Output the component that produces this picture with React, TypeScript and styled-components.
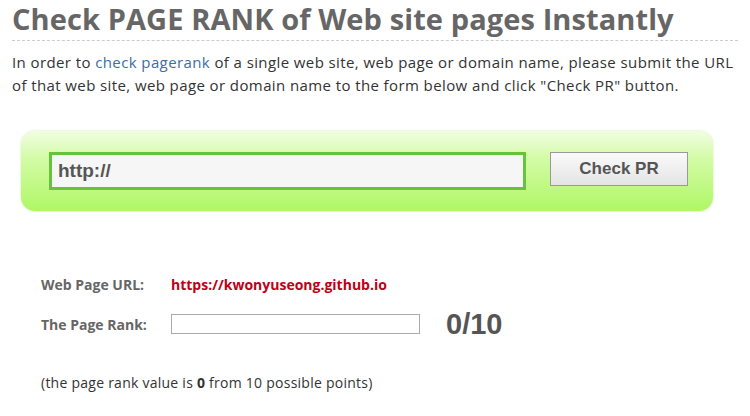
import React from "react";
import styled, { createGlobalStyle } from "styled-components";

const GlobalStyle = createGlobalStyle`
  html, body {
    margin: 0;
    padding: 0;
    background: #fff;
  }
  body {
    font-family: "Open Sans", "DejaVu Sans", sans-serif;
  }
`;

const Page = styled.main`
  width: 750px;
  padding: 0 12px 0 12px;
  box-sizing: border-box;
`;

const Title = styled.h1`
  margin: 0;
  padding: 2px 0 4px;
  font-size: 29px;
  line-height: 34px;
  font-weight: 700;
  color: #666;
  border-bottom: 1px dashed #ccc;
  letter-spacing: 0.1px;
`;

const Intro = styled.p`
  margin: 10px 0 0;
  font-size: 15px;
  line-height: 23px;
  color: #333;
  letter-spacing: 0.4px;

  a {
    color: #3a6ea5;
    text-decoration: none;
  }
`;

const FormPanel = styled.form`
  margin: 34px 0 0 9px;
  width: 692px;
  height: 80px;
  box-sizing: border-box;
  border-radius: 14px;
  background: linear-gradient(to bottom, #f1fde2 0%, #d3fba6 35%, #aef765 100%);
  box-shadow: 0 0 2px rgba(140, 220, 80, 0.6);
  display: flex;
  align-items: flex-start;
  padding: 21px 0 0 28px;
  gap: 24px;
`;

const UrlInput = styled.input`
  width: 477px;
  height: 38px;
  box-sizing: border-box;
  border: 3px solid #66c33b;
  background: #f6f6f6;
  padding: 0 6px;
  font-family: "Liberation Sans", Arial, sans-serif;
  font-size: 19px;
  font-weight: 700;
  color: #555;
  outline: none;
`;

const CheckButton = styled.button`
  width: 138px;
  height: 34px;
  box-sizing: border-box;
  border: 1px solid #999;
  background: linear-gradient(to bottom, #fafafa 0%, #e4e4e4 100%);
  font-family: "Liberation Sans", Arial, sans-serif;
  font-size: 17px;
  font-weight: 700;
  color: #555;
  cursor: pointer;
`;

const Results = styled.section`
  margin: 58px 0 0 29px;
  display: flex;
  flex-direction: column;
`;

const Row = styled.div<{ $h: number }>`
  display: flex;
  align-items: center;
  height: ${(p) => p.$h}px;
`;

const Label = styled.span`
  width: 130px;
  font-size: 14px;
  font-weight: 700;
  color: #666;
`;

const UrlValue = styled.span`
  font-size: 14px;
  font-weight: 700;
  color: #c00018;
`;

const RankBar = styled.div`
  width: 249px;
  height: 20px;
  box-sizing: border-box;
  border: 1px solid #aaa;
  background: #fff;
`;

const RankScore = styled.span`
  margin-left: 26px;
  font-family: "Liberation Sans", Arial, sans-serif;
  font-size: 29px;
  font-weight: 700;
  color: #555;
`;

const Note = styled.p`
  margin: 24px 0 0;
  font-size: 14px;
  color: #333;
  letter-spacing: 0.25px;

  b {
    font-weight: 700;
  }
`;

export default function App() {
  return (
    <>
      <GlobalStyle />
      <Page>
        <Title>Check PAGE RANK of Web site pages Instantly</Title>
        <Intro>
          In order to <a href="#">check pagerank</a> of a single web site, web page or domain
          name, please submit the URL of that web site, web page or domain name to the form
          below and click "Check PR" button.
        </Intro>
        <FormPanel onSubmit={(e) => e.preventDefault()}>
          <UrlInput defaultValue="http://" />
          <CheckButton type="submit">Check PR</CheckButton>
        </FormPanel>
        <Results>
          <Row $h={30}>
            <Label>Web Page URL:</Label>
            <UrlValue>https://kwonyuseong.github.io</UrlValue>
          </Row>
          <Row $h={50}>
            <Label>The Page Rank:</Label>
            <RankBar />
            <RankScore>0/10</RankScore>
          </Row>
          <Note>
            (the page rank value is <b>0</b> from 10 possible points)
          </Note>
        </Results>
      </Page>
    </>
  );
}
